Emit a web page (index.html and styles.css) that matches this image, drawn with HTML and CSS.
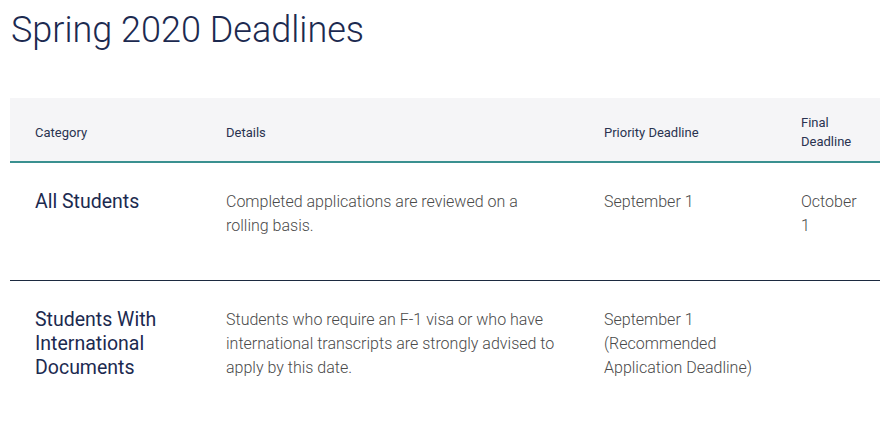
FILE: index.html
```html
<!DOCTYPE html>
<html>
<head>
<meta charset="utf-8">
<link rel="stylesheet" href="styles.css">
</head>
<body>
<div class="page">
  <h1 class="title">Spring 2020 Deadlines</h1>
  <table class="deadlines">
    <thead>
      <tr>
        <th class="c1">Category</th>
        <th class="c2">Details</th>
        <th class="c3">Priority Deadline</th>
        <th class="c4">Final Deadline</th>
      </tr>
    </thead>
    <tbody>
      <tr>
        <td class="cat">All Students</td>
        <td>Completed applications are reviewed on a rolling basis.</td>
        <td>September 1</td>
        <td>October 1</td>
      </tr>
      <tr>
        <td class="cat">Students With International Documents</td>
        <td>Students who require an F-1 visa or who have international transcripts are strongly advised to apply by this date.</td>
        <td>September 1 (Recommended Application Deadline)</td>
        <td></td>
      </tr>
    </tbody>
  </table>
</div>
</body>
</html>
```
FILE: styles.css
```css
html, body {
  margin: 0;
  padding: 0;
  background: #ffffff;
}
body {
  font-family: Roboto, "Liberation Sans", sans-serif;
  color: #1c2a50;
}
.page {
  padding: 0 8px 0 10px;
}
.title {
  margin: 0;
  padding: 8px 0 0 1px;
  font-size: 36px;
  font-weight: 300;
  line-height: 44px;
  color: #1c2a50;
}
.deadlines {
  margin-top: 46px;
  width: 870px;
  border-collapse: collapse;
  table-layout: fixed;
}
.deadlines th,
.deadlines td {
  box-sizing: border-box;
}
.deadlines th {
  background: #f5f5f7;
  border-bottom: 2px solid #3a9090;
  height: 64px;
  padding: 5px 20px 0 25px;
  text-align: left;
  font-size: 13px;
  font-weight: 400;
  line-height: 19px;
  color: #2a3350;
  vertical-align: middle;
}
.c1 { width: 191px; }
.c2 { width: 378px; }
.c3 { width: 197px; }
.c4 { width: 104px; }
.deadlines td {
  padding: 27px 20px 42px 25px;
  vertical-align: top;
  font-size: 16px;
  font-weight: 300;
  line-height: 24px;
  color: #4a4a4a;
}
.deadlines tbody tr:first-child td {
  border-bottom: 1px solid #1c2a40;
}
.deadlines td.cat {
  font-size: 19.5px;
  font-weight: 400;
  color: #1c2a50;
}
```
